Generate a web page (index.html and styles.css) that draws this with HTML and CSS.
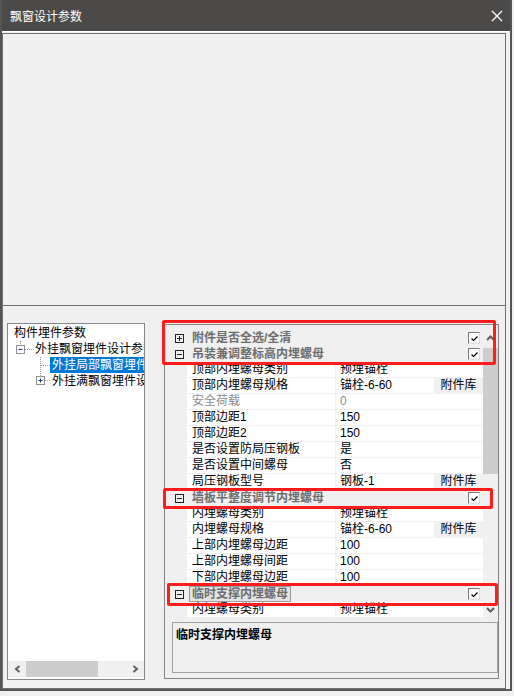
FILE: index.html
```html
<!DOCTYPE html>
<html lang="zh-CN">
<head>
    <meta charset="UTF-8">
    <meta name="viewport" content="width=device-width, initial-scale=1.0">
    <title>飘窗设计参数</title>
    <link rel="stylesheet" href="styles.css">
</head>
<body>

    <div class="window">
        <div class="titlebar">
            <span class="title">飘窗设计参数</span>
            <svg class="close" width="12" height="12" viewBox="0 0 12 12"><path d="M1 1L11 11M11 1L1 11" stroke="#fff" stroke-width="1.3"/></svg>
        </div>

        <div class="preview"></div>

        <div class="lower">
            <div class="tree">
                <div class="tree-items">
                    <div class="node root">构件埋件参数</div>
                    <div class="node">
                        <svg class="gutter" width="26" height="16" viewBox="0 0 26 16">
                            <path d="M12.5 0V4M17 8.5H26" stroke="#a0a0a0" stroke-dasharray="1 1"/>
                            <rect x="8.5" y="4.5" width="8" height="8" fill="#fbfbfb" stroke="#919191"/>
                            <path d="M10.5 8.5H14.5" stroke="#1e3c8c"/>
                        </svg>
                        <span class="label">外挂飘窗埋件设计参数</span>
                    </div>
                    <div class="node">
                        <svg class="gutter" width="42" height="16" viewBox="0 0 42 16">
                            <path d="M32.5 0V16M33 8.5H42" stroke="#a0a0a0" stroke-dasharray="1 1"/>
                        </svg>
                        <span class="label selected">外挂局部飘窗埋件参数</span>
                    </div>
                    <div class="node">
                        <svg class="gutter" width="43" height="16" viewBox="0 0 43 16">
                            <path d="M32.5 0V3M37 7.5H43" stroke="#a0a0a0" stroke-dasharray="1 1"/>
                            <rect x="28.5" y="3.5" width="8" height="8" fill="#fbfbfb" stroke="#919191"/>
                            <path d="M30.5 7.5H34.5M32.5 5.5V9.5" stroke="#1e3c8c"/>
                        </svg>
                        <span class="label">外挂满飘窗埋件设计参数</span>
                    </div>
                </div>
                <div class="hscroll">
                    <div class="harrow"><svg width="7" height="8" viewBox="0 0 7 8"><path d="M5.5 1L2 4L5.5 7" fill="none" stroke="#606060" stroke-width="2"/></svg></div>
                    <div class="hthumb"></div>
                    <div class="hspace"></div>
                    <div class="harrow"><svg width="7" height="8" viewBox="0 0 7 8"><path d="M1.5 1L5 4L1.5 7" fill="none" stroke="#606060" stroke-width="2"/></svg></div>
                </div>
            </div>

            <div class="props">
                <div class="grid">
                    <div class="rows">
                        <div class="cat">
                            <div class="cat-icon"><svg width="9" height="9" viewBox="0 0 9 9"><rect x="0.5" y="0.5" width="8" height="8" fill="none" stroke="#222"/><path d="M2 4.5H7M4.5 2V7" stroke="#222"/></svg></div>
                            <span class="cat-name">附件是否全选/全清</span>
                            <span class="check"><svg width="9" height="9" viewBox="0 0 9 9"><path d="M1.5 4.5L3.5 6.5L7.5 2.5" fill="none" stroke="#000" stroke-width="1.2"/></svg></span>
                        </div>
                        <div class="cat">
                            <div class="cat-icon"><svg width="9" height="9" viewBox="0 0 9 9"><rect x="0.5" y="0.5" width="8" height="8" fill="none" stroke="#222"/><path d="M2 4.5H7" stroke="#222"/></svg></div>
                            <span class="cat-name">吊装兼调整标高内埋螺母</span>
                            <span class="check"><svg width="9" height="9" viewBox="0 0 9 9"><path d="M1.5 4.5L3.5 6.5L7.5 2.5" fill="none" stroke="#000" stroke-width="1.2"/></svg></span>
                        </div>
                        <div class="row"><span class="name">顶部内埋螺母类别</span><span class="value">预埋锚栓</span></div>
                        <div class="row"><span class="name">顶部内埋螺母规格</span><span class="value">锚栓-6-60<span class="lib">附件库</span></span></div>
                        <div class="row muted"><span class="name">安全荷载</span><span class="value">0</span></div>
                        <div class="row"><span class="name">顶部边距1</span><span class="value">150</span></div>
                        <div class="row"><span class="name">顶部边距2</span><span class="value">150</span></div>
                        <div class="row"><span class="name">是否设置防局压钢板</span><span class="value">是</span></div>
                        <div class="row"><span class="name">是否设置中间螺母</span><span class="value">否</span></div>
                        <div class="row"><span class="name">局压钢板型号</span><span class="value">钢板-1<span class="lib">附件库</span></span></div>
                        <div class="cat">
                            <div class="cat-icon"><svg width="9" height="9" viewBox="0 0 9 9"><rect x="0.5" y="0.5" width="8" height="8" fill="none" stroke="#222"/><path d="M2 4.5H7" stroke="#222"/></svg></div>
                            <span class="cat-name">墙板平整度调节内埋螺母</span>
                            <span class="check"><svg width="9" height="9" viewBox="0 0 9 9"><path d="M1.5 4.5L3.5 6.5L7.5 2.5" fill="none" stroke="#000" stroke-width="1.2"/></svg></span>
                        </div>
                        <div class="row"><span class="name">内埋螺母类别</span><span class="value">预埋锚栓</span></div>
                        <div class="row"><span class="name">内埋螺母规格</span><span class="value">锚栓-6-60<span class="lib">附件库</span></span></div>
                        <div class="row"><span class="name">上部内埋螺母边距</span><span class="value">100</span></div>
                        <div class="row"><span class="name">上部内埋螺母间距</span><span class="value">100</span></div>
                        <div class="row"><span class="name">下部内埋螺母边距</span><span class="value">100</span></div>
                        <div class="cat">
                            <div class="cat-icon"><svg width="9" height="9" viewBox="0 0 9 9"><rect x="0.5" y="0.5" width="8" height="8" fill="none" stroke="#222"/><path d="M2 4.5H7" stroke="#222"/></svg></div>
                            <span class="cat-name focused">临时支撑内埋螺母</span>
                            <span class="check"><svg width="9" height="9" viewBox="0 0 9 9"><path d="M1.5 4.5L3.5 6.5L7.5 2.5" fill="none" stroke="#000" stroke-width="1.2"/></svg></span>
                        </div>
                        <div class="row"><span class="name">内埋螺母类别</span><span class="value">预埋锚栓</span></div>
                    </div>
                    <div class="vscroll">
                        <div class="varrow"><svg width="9" height="6" viewBox="0 0 9 6"><path d="M1 5L4.5 1.5L8 5" fill="none" stroke="#606060" stroke-width="2"/></svg></div>
                        <div class="vthumb"></div>
                        <div class="vspace"></div>
                        <div class="varrow"><svg width="9" height="6" viewBox="0 0 9 6"><path d="M1 1L4.5 4.5L8 1" fill="none" stroke="#606060" stroke-width="2"/></svg></div>
                    </div>
                </div>
                <div class="desc">临时支撑内埋螺母</div>

                <div class="mark mark-top"></div>
                <div class="mark mark-wall"></div>
                <div class="mark mark-temp"></div>
            </div>
        </div>
    </div>

</body>
</html>
```

FILE: styles.css
```css
body {
    margin: 0;
    background-color: #f0f0f0;
    font-family: 'Liberation Sans', 'Noto Sans CJK SC', sans-serif;
    font-size: 12px;
    color: #000;
}
.window {
    width: 512px;
    height: 691px;
    box-sizing: border-box;
    border: 2px solid #555555;
    border-top: none;
    background-color: #f0f0f0;
}
.titlebar {
    height: 31px;
    border-bottom: 1px solid #ffffff;
    background-color: #4b4a48;
    color: #ffffff;
    display: flex;
    align-items: center;
    justify-content: space-between;
    padding: 0 7px 0 8px;
    font-size: 12px;
}
.close {
    display: block;
}
.preview {
    height: 273px;
    width: 504px;
    margin-top: 1px;
    box-sizing: border-box;
    border: 1px solid #6e6e6e;
}
.lower {
    height: 383px;
    width: 504px;
    box-sizing: border-box;
    border: 1px solid #6e6e6e;
    border-top: none;
    display: flex;
    align-items: flex-start;
    padding-top: 17px;
}

/* tree */
.tree {
    width: 138px;
    height: 357px;
    margin-left: 4px;
    box-sizing: border-box;
    border: 1px solid #828790;
    background-color: #ffffff;
    display: flex;
    flex-direction: column;
}
.tree-items {
    flex: 1;
    overflow: hidden;
    padding-top: 1px;
}
.node {
    height: 16px;
    line-height: 16px;
    display: flex;
    white-space: nowrap;
}
.node.root {
    padding-left: 6px;
}
.gutter {
    flex-shrink: 0;
    display: block;
}
.label {
    padding-left: 1px;
}
.label.selected {
    background-color: #0078d7;
    color: #ffffff;
    padding: 0 2px;
}
.hscroll {
    height: 16px;
    margin-bottom: 2px;
    background-color: #f0f0f0;
    display: flex;
}
.harrow {
    width: 17px;
    display: flex;
    align-items: center;
    justify-content: center;
}
.harrow:first-child {
    width: 18px;
}
.hthumb {
    width: 72px;
    background-color: #cdcdcd;
}
.hspace {
    flex: 1;
}

/* property grid */
.props {
    position: relative;
    width: 335px;
    height: 355px;
    margin-top: 1px;
    margin-left: 19px;
    box-sizing: border-box;
    border: 1px solid #828282;
    padding: 5px 0 0 3px;
}
.grid {
    display: flex;
    height: 288px;
    overflow: hidden;
}
.rows {
    width: 315px;
}
.cat {
    height: 16px;
    display: flex;
    align-items: center;
    background-color: #f0f0f0;
}
.cat-icon {
    width: 19px;
    padding-left: 7px;
    box-sizing: border-box;
    display: flex;
}
.cat-name {
    margin-left: 5px;
    font-weight: bold;
    color: #6d6d6d;
    line-height: 14px;
}
.cat-name.focused {
    margin-left: 2px;
    padding: 0 2px;
    border: 1px solid #9a9a9a;
    background-color: #e4e4e4;
}
.check {
    margin-left: auto;
    margin-right: 3px;
    width: 12px;
    height: 12px;
    box-sizing: border-box;
    border-top: 1px solid #7a7a7a;
    border-left: 1px solid #7a7a7a;
    border-right: 1px solid #dcdcdc;
    border-bottom: 1px solid #dcdcdc;
    background-color: #ffffff;
    display: flex;
    align-items: center;
    justify-content: center;
}
.row {
    height: 16px;
    display: flex;
    padding-left: 19px;
    background-color: #f0f0f0;
}
.name, .value {
    height: 15px;
    line-height: 15px;
    background-color: #ffffff;
    border-bottom: 1px solid #f0f0f0;
    white-space: nowrap;
}
.name {
    padding-left: 5px;
    width: 143px;
}
.value {
    border-left: 1px solid #f0f0f0;
    padding-left: 4px;
    width: 143px;
    display: flex;
}
.row.muted {
    color: #8c8c8c;
}
.lib {
    margin-left: auto;
    width: 49px;
    text-align: center;
    background-color: #f0f0f0;
}
.vscroll {
    width: 15px;
    background-color: #f0f0f0;
    display: flex;
    flex-direction: column;
}
.varrow {
    height: 16px;
    display: flex;
    align-items: center;
    justify-content: center;
}
.vthumb {
    margin-top: 2px;
    height: 126px;
    background-color: #cdcdcd;
}
.vspace {
    flex: 1;
}
.desc {
    margin: 4px 0 0 4px;
    width: 326px;
    height: 51px;
    box-sizing: border-box;
    border: 1px solid #a0a0a0;
    padding: 2px 3px;
    font-weight: bold;
}

/* red annotation frames */
.mark {
    position: absolute;
    box-sizing: border-box;
    border: 3px solid #ff1c1c;
    border-radius: 2px;
}
.mark-top {
    left: -3px;
    top: -5px;
    width: 334px;
    height: 45px;
}
.mark-wall {
    left: -2px;
    top: 163px;
    width: 330px;
    height: 21px;
}
.mark-temp {
    left: 2px;
    top: 258px;
    width: 331px;
    height: 23px;
}
```
